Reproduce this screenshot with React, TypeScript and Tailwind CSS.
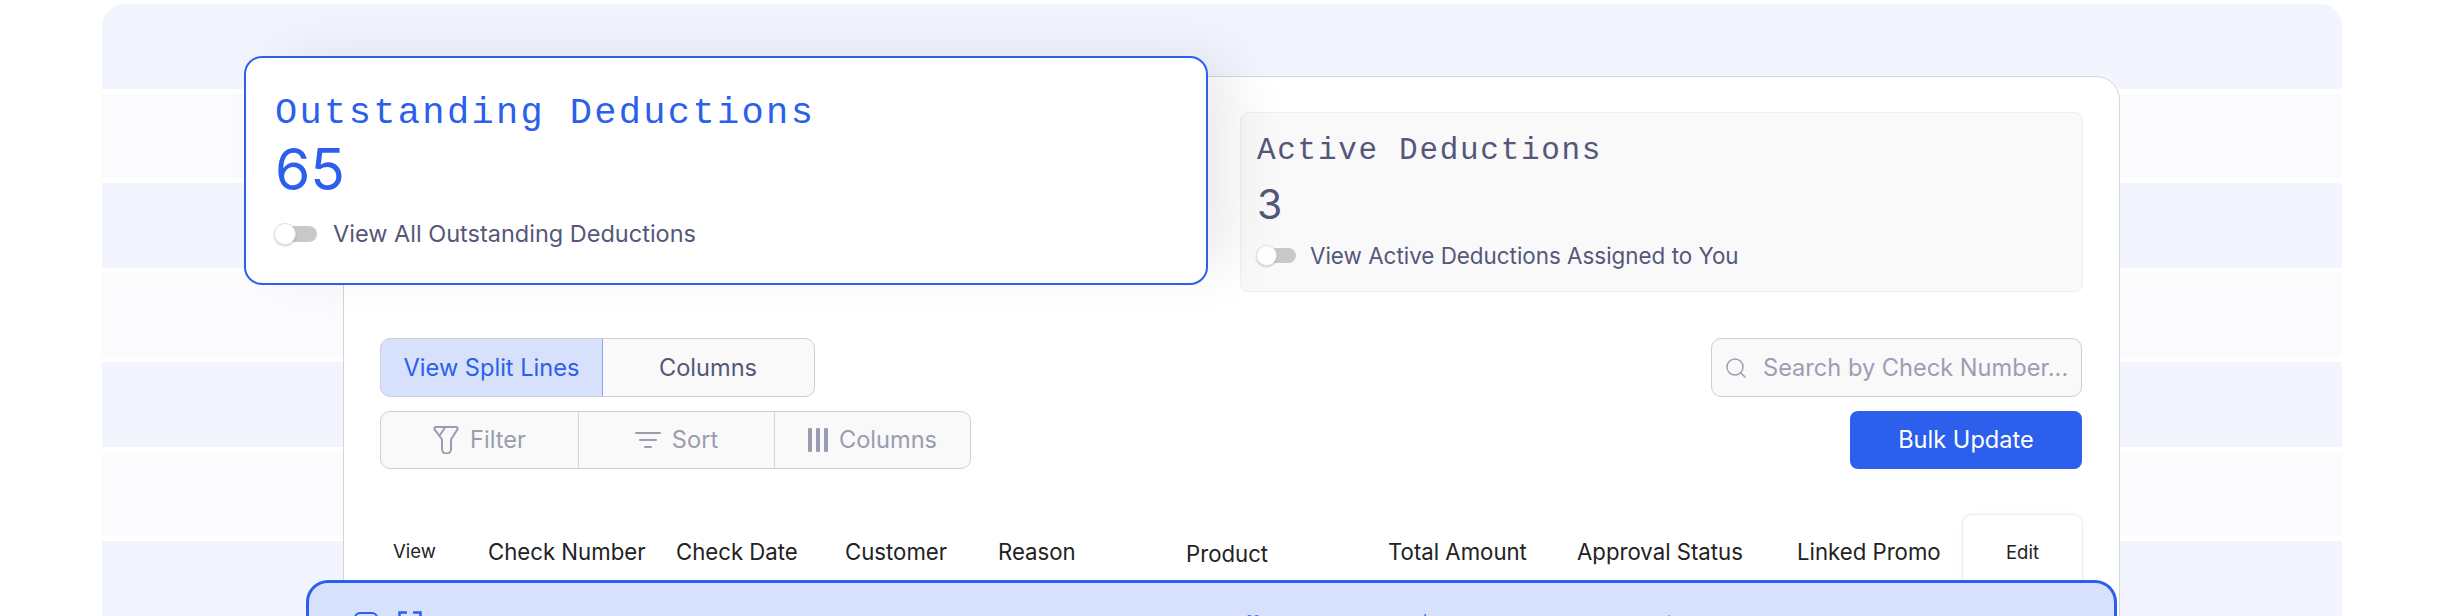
import { Search } from "lucide-react";

const sans = "font-['Inter','Liberation_Sans',sans-serif]";
const mono = "font-['Liberation_Mono',monospace]";

// the striped backdrop behind the card
const stripes = ["bg-[#f2f5fe]", "bg-[#fbfbfe]", "bg-[#f2f5fe]", "bg-[#fbfbfe]", "bg-[#f2f5fe]", "bg-[#fbfbfe]", "bg-[#f2f5fe]"];

const headers = [
  { label: "View", w: "w-[95px]", size: "text-[18.5px]" },
  { label: "Check Number", w: "w-[188px]", size: "text-[22.2px]" },
  { label: "Check Date", w: "w-[169px]", size: "text-[22.2px]" },
  { label: "Customer", w: "w-[153px]", size: "text-[22.2px]" },
  { label: "Reason", w: "w-[188px]", size: "text-[22.2px]" },
  { label: "Product", w: "w-[202px]", size: "text-[22.2px] pt-[3px]" },
  { label: "Total Amount", w: "w-[189px]", size: "text-[22.2px]" },
  { label: "Approval Status", w: "w-[220px]", size: "text-[22.2px]" },
  { label: "Linked Promo", w: "w-[165px]", size: "text-[22.2px]" },
];

const rowCells = [
  { label: "12 Oct", w: "w-[157px]" },
  { label: "Walmart", w: "w-[140px]" },
  { label: "Trade Spend", w: "w-[240px]" },
  { label: "Coffee blend", w: "w-[204px]" },
  { label: "$1,240", w: "w-[195px]" },
  { label: "Pending", w: "w-[270px]" },
  { label: "Promo", w: "w-[100px]" },
];

function Toggle({ big }: { big?: boolean }) {
  return (
    <span className={`relative inline-block shrink-0 ${big ? "-ml-[1px] h-[22px] w-[43px]" : "h-[21px] w-[40px]"}`}>
      <span className="absolute top-[3px] right-0 bottom-[3px] left-[4px] rounded-full bg-[#c9c9c9]" />
      <span className={`absolute top-0 left-0 rounded-full border border-[#e2e2e2] bg-white shadow-[0_1px_2px_rgba(0,0,0,0.2)] ${big ? "h-[22px] w-[22px]" : "h-[21px] w-[21px]"}`} />
    </span>
  );
}

function FilterIcon() {
  return (
    <svg width="26" height="28" viewBox="0 0 26 28" fill="none" stroke="#9a9cb0" strokeWidth="2" strokeLinejoin="round" strokeLinecap="round">
      <path d="M3 1h20a1.6 1.6 0 0 1 1.4 2.4L18 13.5V23a4.5 4.5 0 0 1-9 0v-9.500L1.600 3.400A1.600 1.600 0 0 1 3 1Z" />
      <path d="M12 1.500 7 9" />
    </svg>
  );
}

function SortIcon() {
  return (
    <svg width="26" height="20" viewBox="0 0 26 20" fill="none" stroke="#9a9cb0" strokeWidth="2" strokeLinecap="round">
      <path d="M1 3h24M5 10h16M10 17h6" />
    </svg>
  );
}

function ColumnsIcon() {
  return (
    <svg width="20" height="24" viewBox="0 0 20 24" fill="#9a9cb0">
      <rect x="0" y="0" width="4" height="24" rx="1" />
      <rect x="8" y="0" width="4" height="24" rx="1" />
      <rect x="16" y="0" width="4" height="24" rx="1" />
    </svg>
  );
}

function Toolbar() {
  return (
    <div className="mt-[46px] flex items-start justify-between pr-[37px] pl-[36px]">
      <div className="flex flex-col gap-[14px]">
        <div className="flex h-[59px] w-[435px] overflow-hidden rounded-[10px] border border-[#cfcfd3] bg-[#f9f9f9] text-[23.6px]">
          <div className="-m-px flex w-[223px] items-center justify-center rounded-l-[10px] border border-[#86a5f6] bg-[#d7e1fc] text-[#2b5fec]">
            View Split Lines
          </div>
          <div className="flex flex-1 items-center justify-center text-[#55577a]">Columns</div>
        </div>
        <div className="flex h-[58px] w-[591px] divide-x divide-[#d6d6d8] rounded-[10px] border border-[#cfcfd3] bg-[#f9f9f9] text-[23.6px] text-[#9a9cb0]">
          <div className="flex w-[198px] items-center justify-center gap-[11px]">
            <FilterIcon />
            Filter
          </div>
          <div className="flex w-[196px] items-center justify-center gap-[11px]">
            <SortIcon />
            Sort
          </div>
          <div className="flex flex-1 items-center justify-center gap-[11px]">
            <ColumnsIcon />
            Columns
          </div>
        </div>
      </div>
      <div className="flex flex-col items-end gap-[14px]">
        <div className="flex h-[59px] w-[371px] items-center gap-[15px] rounded-[10px] border border-[#cfcfd3] bg-[#f9f9f9] pl-[12px] text-[23.6px] text-[#9c9eb4]">
          <Search size={24} strokeWidth={1.5} color="#9c9eb4" />
          Search by Check Number...
        </div>
        <button type="button" className="flex h-[58px] w-[232px] items-center justify-center rounded-[8px] bg-[#2b5fec] text-[23.6px] text-white">
          Bulk Update
        </button>
      </div>
    </div>
  );
}

function TableHeader() {
  return (
    <div className="mt-[45px] flex items-center pr-[36px] pl-[49px] text-[#222]">
      {headers.map((h) => (
        <div key={h.label} className={`${h.w} ${h.size} shrink-0`}>
          {h.label}
        </div>
      ))}
      <div className="flex h-[76px] flex-1 items-center justify-center rounded-t-[10px] border border-b-0 border-[#ececee] bg-white text-[18.5px] shadow-[0_0_8px_rgba(0,0,0,0.03)]">
        Edit
      </div>
    </div>
  );
}

export default function App() {
  return (
    <div className={`h-[616px] w-[2460px] overflow-hidden bg-white pt-[4px] pl-[102px] ${sans}`}>
      <div className="relative h-[612px] w-[2240px] overflow-hidden rounded-t-[22px]">
        <div className="absolute inset-0 flex flex-col gap-[5px]">
          {stripes.map((c, i) => (
            <div key={i} className={`h-[84.5px] shrink-0 ${c}`} />
          ))}
        </div>

        {/* main card */}
        <div className="relative mt-[72px] ml-[241px] h-[600px] w-[1777px] rounded-t-[24px] border border-[#d5d5d8] bg-white pt-[35px]">
          <div className="flex justify-end pr-[36px]">
            <div className="h-[180px] w-[843px] rounded-[8px] border border-[#efeff0] bg-[#f9f9f9] pt-[20px] pl-[16px] text-[#55577a]">
              <div className={`${mono} text-[31px] leading-[36px] tracking-[1.7px]`}>Active Deductions</div>
              <div className="mt-[10px] text-[41px] leading-[50px]">3</div>
              <div className="mt-[16px] -ml-[1px] flex items-center gap-[14px] text-[22.4px] leading-[21px]">
                <Toggle />
                View Active Deductions Assigned to You
              </div>
            </div>
          </div>
          <Toolbar />
          <TableHeader />
        </div>

        {/* floating summary card */}
        <div className="absolute top-[52px] left-[142px] h-[229px] w-[964px] rounded-[18px] border-2 border-[#2b5fec] bg-white pt-[33px] pl-[29px] text-[#2b5fec] shadow-[30px_-10px_60px_-10px_rgba(0,0,0,0.09)]">
          <div className={`${mono} text-[37px] leading-[44px] tracking-[2.35px]`}>Outstanding Deductions</div>
          <div className="mt-[1px] text-[57px] leading-[68px]">65</div>
          <div className="mt-[19px] flex items-center gap-[16px] text-[23.5px] leading-[22px] text-[#55577a]">
            <Toggle big />
            View All Outstanding Deductions
          </div>
        </div>

        {/* highlighted row, cut off by the bottom of the frame */}
        <div className="absolute top-[576px] left-[204px] flex h-[80px] w-[1811px] items-start rounded-t-[22px] border-[3px] border-b-0 border-[#2b5fec] bg-[#d7e1fc] pt-[29px] pl-[45px] text-[22px] leading-[26px] text-[#2b5fec]">
          <span className="h-[24px] w-[24px] shrink-0 rounded-[6px] border-2 border-[#2b5fec]" />
          <svg className="mt-[-1px] ml-[20px] shrink-0" width="24" height="24" viewBox="0 0 24 24" fill="none" stroke="#2b5fec" strokeWidth="2.500">
            <path d="M9 1.500H1.500V22M15 1.500h7.500V22" />
          </svg>
          <div className="mt-[-1px] ml-[255px] flex">
            {rowCells.map((c) => (
              <span key={c.label} className={`${c.w} shrink-0`}>
                {c.label}
              </span>
            ))}
          </div>
        </div>
      </div>
    </div>
  );
}
